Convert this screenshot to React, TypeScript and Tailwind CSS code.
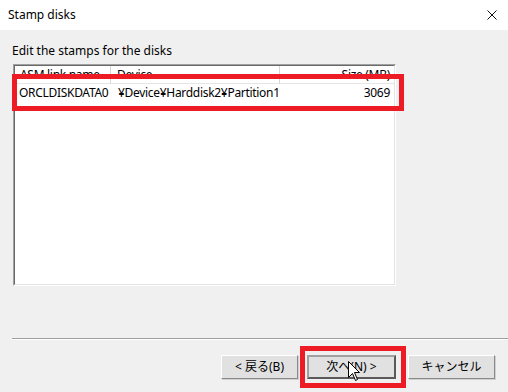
import React from 'react';

const font = "font-[family-name:'Noto_Sans','Noto_Sans_CJK_JP',sans-serif]";

const WinButton: React.FC<{ label: string; main?: boolean; className?: string }> = ({ label, main, className }) => (
  <div
    className={`h-[24px] flex items-center justify-center text-[12px] text-black bg-[#e1e1e1] ${
      main ? 'border-2 border-t-[#a0a0a0] border-l-[#a0a0a0] border-r-[#5a5a5a] border-b-[#5a5a5a]' : 'border border-t-white border-l-white border-r-[#8a8a8a] border-b-[#8a8a8a] shadow-[1px_1px_0_#d0d0d0]'
    } ${className ?? ''}`}
  >
    {label}
  </div>
);

const App: React.FC = () => {
  return (
    <div className={`relative w-[508px] h-[392px] overflow-hidden bg-[#f0f0f0] ${font}`}>
      {/* title bar */}
      <div className="h-[30px] bg-white flex items-center justify-between pl-[8px] pr-[11px]">
        <span className="text-[12px] text-black">Stamp disks</span>
        <svg width="10" height="10" viewBox="0 0 10 10">
          <path d="M0.5 0.5 L9.5 9.5 M9.5 0.5 L0.5 9.5" stroke="#111" strokeWidth="1" />
        </svg>
      </div>

      <div className="pl-[12px] pt-[13px]">
        <div className="text-[12px] leading-[16px] text-black">Edit the stamps for the disks</div>

        {/* list view */}
        <div className="mt-[5px] ml-[1px] w-[383px] h-[222px] border border-t-[#a0a0a0] border-l-[#a0a0a0] border-r-white border-b-white">
          <div className="h-full border border-t-[#696969] border-l-[#696969] border-r-[#e3e3e3] border-b-[#e3e3e3] bg-white">
            <div className="flex h-[18px] text-[12px] text-black tracking-[-0.3px]">
              <div className="w-[96px] pl-[5px] flex items-center border-r border-r-[#d5d5d5] border-b border-b-[#e5e5e5]">ASM link name</div>
              <div className="w-[169px] pl-[6px] flex items-center border-r border-r-[#d5d5d5] border-b border-b-[#e5e5e5]">Device</div>
              <div className="flex-1 pr-[4px] flex items-center justify-end border-b border-b-[#e5e5e5]">Size (MB)</div>
            </div>
            <div className="flex h-[18px] items-center text-[12px] text-black tracking-[-0.3px]">
              <div className="w-[96px] pl-[4px]">ORCLDISKDATA0</div>
              <div className="w-[169px] pl-[7px] whitespace-nowrap">¥Device¥Harddisk2¥Partition1</div>
              <div className="flex-1 pr-[4px] text-right">3069</div>
            </div>
          </div>
        </div>

        {/* separator */}
        <div className="mt-[52px] h-[2px] border-t border-t-[#a0a0a0] border-b border-b-white" />

        {/* buttons */}
        <div className="mt-[15px] flex items-center">
          <WinButton label="< 戻る(B)" className="ml-[209px] w-[77px]" />
          <WinButton label="次へ(N) >" main className="ml-[9px] w-[89px]" />
          <WinButton label="キャンセル" className="ml-[12px] w-[87px]" />
        </div>
      </div>

      {/* red annotation boxes */}
      <div className="absolute left-[12px] top-[74px] w-[392px] h-[37px] border-[5px] border-[#ed1c24]" />
      <div className="absolute left-[300px] top-[346px] w-[106px] h-[42px] border-[5px] border-[#ed1c24]" />

      {/* mouse cursor */}
      <svg className="absolute left-[348px] top-[361px]" width="13" height="21" viewBox="0 0 13 21">
        <path d="M0.5 0.5 L0.5 16.5 L4.5 12.5 L7.5 19.5 L9.5 18.5 L6.5 11.5 L11.5 11.5 Z" fill="#fff" stroke="#000" strokeWidth="1" />
      </svg>
    </div>
  );
};

export default App;
